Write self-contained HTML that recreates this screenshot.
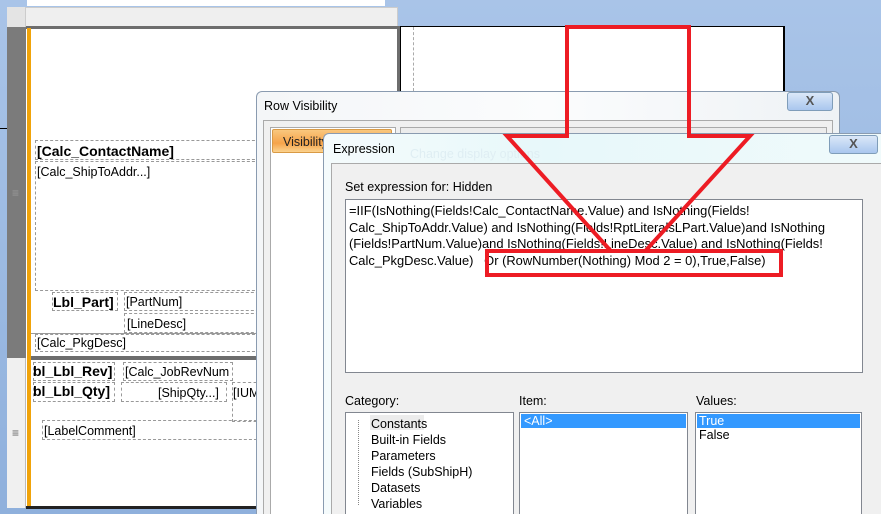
<!DOCTYPE html>
<html style="width:881px;height:514px;overflow:hidden"><head><style>
*{margin:0;padding:0;box-sizing:border-box}
body{width:881px;height:514px;overflow:hidden;position:relative;background:linear-gradient(180deg,#a9c4e8,#8fb0dc);font-family:"Liberation Sans",sans-serif;font-size:12.5px;color:#000}
.a{position:absolute}
.dot{position:absolute;border:1px dashed #999}
.b{font-weight:bold;font-size:14px}
.x{position:absolute;border:1px solid #7f9db9;border-radius:3px;background:linear-gradient(#dbe8f8,#a9c6ee);color:#555;font-weight:bold;text-align:center;font-size:13px;line-height:16px}
.lst{position:absolute;background:#fff;border:1px solid #828790}
</style></head><body>
<div class="a" style="left:27px;top:0;width:358px;height:6px;background:#fff"></div>
<div class="a" style="left:7px;top:7px;width:391px;height:20px;background:#efefef;border:1px solid #ccc"></div>
<div class="a" style="left:7px;top:7px;width:19px;height:20px;background:#e4e4e4;border-right:1px solid #ccc"></div>
<div class="a" style="left:7px;top:27px;width:19px;height:331px;background:#7b7b7b"></div>
<div class="a" style="left:7px;top:358px;width:19px;height:150px;background:#f0f0f0;border-right:1px solid #bbb"></div>
<div class="a" style="left:12px;top:186px;color:#999;font-size:12px">≡</div>
<div class="a" style="left:12px;top:426px;color:#666;font-size:12px">≡</div>
<div class="a" style="left:26px;top:27px;width:372px;height:481px;background:#fff"></div>
<div class="a" style="left:26px;top:26px;width:374px;height:3px;background:#6d6d6d"></div>
<div class="a" style="left:397px;top:26px;width:3px;height:70px;background:#6d6d6d"></div>
<div class="a" style="left:27px;top:28px;width:4px;height:478px;background:#f0a30a"></div>
<div class="a" style="left:26px;top:506px;width:230px;height:3px;background:#222"></div>
<div class="a" style="left:0;top:128px;width:7px;height:1px;background:#000"></div>
<div class="a" style="left:400px;top:26px;width:385px;height:66px;background:#fff;border:1px solid #000;border-right:2px solid #000"></div>
<div class="a" style="left:413px;top:27px;height:64px;border-left:1px dashed #aaa"></div>
<div class="dot" style="left:35px;top:140px;width:230px;height:20px"></div>
<div class="a b" style="left:37px;top:143px">[Calc_ContactName]</div>
<div class="dot" style="left:35px;top:161px;width:230px;height:130px"></div>
<div class="a" style="left:37px;top:165px">[Calc_ShipToAddr...]</div>
<div class="dot" style="left:52px;top:292px;width:66px;height:19px"></div>
<div class="a b" style="left:53px;top:294px">Lbl_Part]</div>
<div class="dot" style="left:124px;top:292px;width:140px;height:19px"></div>
<div class="a" style="left:126px;top:295px">[PartNum]</div>
<div class="dot" style="left:124px;top:313px;width:140px;height:20px"></div>
<div class="a" style="left:127px;top:317px">[LineDesc]</div>
<div class="a" style="left:31px;top:333px;width:225px;height:1px;background:#999"></div>
<div class="dot" style="left:35px;top:334px;width:225px;height:18px"></div>
<div class="a" style="left:37px;top:336px">[Calc_PkgDesc]</div>
<div class="a" style="left:31px;top:356px;width:225px;height:4px;background:#6d6d6d"></div>
<div class="dot" style="left:33px;top:362px;width:82px;height:19px"></div>
<div class="a b" style="left:33px;top:363px">bl_Lbl_Rev]</div>
<div class="dot" style="left:123px;top:362px;width:110px;height:19px"></div>
<div class="a" style="left:125px;top:365px">[Calc_JobRevNum</div>
<div class="dot" style="left:33px;top:382px;width:82px;height:20px"></div>
<div class="a b" style="left:33px;top:383px">bl_Lbl_Qty]</div>
<div class="dot" style="left:121px;top:382px;width:106px;height:20px"></div>
<div class="a" style="left:158px;top:386px">[ShipQty...]</div>
<div class="dot" style="left:232px;top:382px;width:30px;height:40px"></div>
<div class="a" style="left:233px;top:386px">[IUM</div>
<div class="dot" style="left:42px;top:420px;width:220px;height:20px"></div>
<div class="a" style="left:44px;top:424px">[LabelComment]</div>

<div class="a" style="left:256px;top:91px;width:584px;height:423px;background:linear-gradient(90deg,#f4f6f8,#fbfcfd 50%,#eef2f5);border:1px solid #8a9bb0;border-bottom:none;border-radius:6px 6px 0 0"></div>
<div class="a" style="left:264px;top:99px">Row Visibility</div>
<div class="x" style="left:787px;top:92px;width:46px;height:19px">X</div>
<div class="a" style="left:263px;top:120px;width:570px;height:394px;background:#f0f0f0;border:1px solid #aaa;border-bottom:none"></div>
<div class="a" style="left:270px;top:127px;width:126px;height:387px;background:#fff;border:1px solid #aaa;border-bottom:none"></div>
<div class="a" style="left:272px;top:129px;width:120px;height:24px;background:linear-gradient(#f9c77e,#f6a34a 60%,#fbd28e);border:1px solid #d99a45;border-radius:2px"></div>
<div class="a" style="left:283px;top:135px;color:#222">Visibility</div>
<div class="a" style="left:400px;top:127px;width:427px;height:20px;background:#ececec;border:1px solid #aaa"></div>

<div class="a" style="left:323px;top:133px;width:558px;height:381px;background:linear-gradient(90deg,#f5fbfc,#e7f8fa 40%,#f0fafb);border:1px solid #8a9bb0;border-right:none;border-bottom:none;border-radius:6px 0 0 0"></div>
<div class="a" style="left:333px;top:142px">Expression</div>
<div class="a" style="left:410px;top:147px;color:#dfeef3">Change display options</div>
<div class="x" style="left:829px;top:135px;width:49px;height:19px">X</div>
<div class="a" style="left:331px;top:163px;width:550px;height:351px;background:#f0f0f0;border:1px solid #aaa;border-right:none;border-bottom:none"></div>
<div class="a" style="left:345px;top:180px">Set expression for: Hidden</div>
<div class="a" style="left:345px;top:199px;width:518px;height:174px;background:#fff;border:1px solid #828790"></div>
<div class="a" style="left:349px;top:203px;width:512px;line-height:16.7px;font-size:12.9px;white-space:pre">=IIF(IsNothing(Fields!Calc_ContactName.Value) and IsNothing(Fields!
Calc_ShipToAddr.Value) and IsNothing(Fields!RptLiteralsLPart.Value)and IsNothing
(Fields!PartNum.Value)and IsNothing(Fields!LineDesc.Value) and IsNothing(Fields!
Calc_PkgDesc.Value)   Or (RowNumber(Nothing) Mod 2 = 0),True,False)</div>
<div class="a" style="left:345px;top:394px">Category:</div>
<div class="a" style="left:519px;top:394px">Item:</div>
<div class="a" style="left:696px;top:394px">Values:</div>
<div class="lst" style="left:345px;top:412px;width:169px;height:102px;border-bottom:none"></div>
<div class="a" style="left:370px;top:415px;width:54px;height:15px;background:#ececec"></div>
<div class="a" style="left:358px;top:420px;height:85px;border-left:1px dotted #888"></div>
<div class="a" style="left:371px;top:416px;line-height:16px">Constants<br>Built-in Fields<br>Parameters<br>Fields (SubShipH)<br>Datasets<br>Variables</div>
<div class="lst" style="left:519px;top:412px;width:169px;height:102px;border-bottom:none"></div>
<div class="a" style="left:521px;top:414px;width:165px;height:14px;background:#3399ff;color:#fff;padding-left:3px;line-height:14px">&lt;All&gt;</div>
<div class="lst" style="left:695px;top:412px;width:167px;height:102px;border-bottom:none"></div>
<div class="a" style="left:697px;top:414px;width:163px;height:14px;background:#3399ff;color:#fff;padding-left:2px;line-height:14px">True</div>
<div class="a" style="left:699px;top:428px">False</div>

<svg class="a" style="left:0;top:0" width="881" height="514">
<defs><clipPath id="c"><rect x="0" y="0" width="881" height="251"/></clipPath></defs>
<g fill="none" stroke="#ed1c24" stroke-width="4" stroke-linejoin="miter">
<path clip-path="url(#c)" d="M567,27 L567,136 L507,136 L628,270 L750,136 L689,136 L689,27 Z"/>
<rect x="487" y="251" width="294" height="24"/>
</g></svg>
</body></html>
